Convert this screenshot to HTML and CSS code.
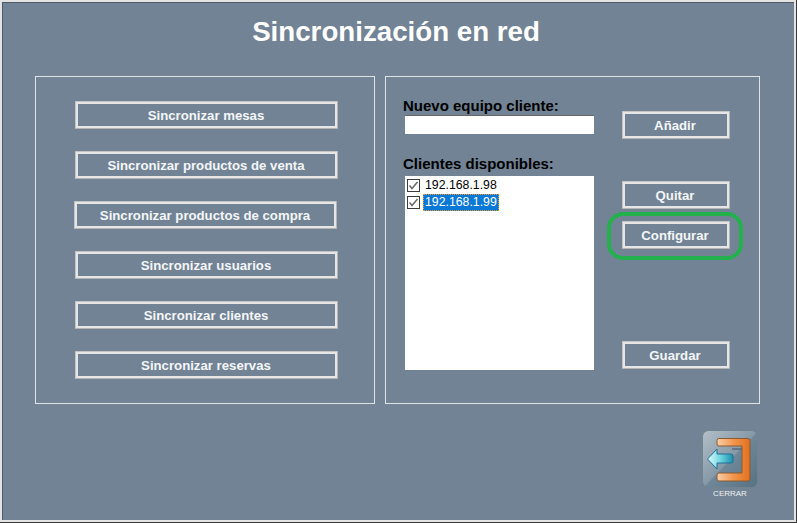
FILE: index.html
```html
<!DOCTYPE html>
<html lang="es">
<head>
<meta charset="utf-8">
<title>Sincronización en red</title>
<link rel="stylesheet" href="styles.css">
</head>
<body>
<main class="window">
  <h1 class="title">Sincronización en red</h1>
  <div class="panels">
    <section class="panel panel-left">
      <button class="btn btn-wide">Sincronizar mesas</button>
      <button class="btn btn-wide">Sincronizar productos de venta</button>
      <button class="btn btn-wide btn-shift">Sincronizar productos de compra</button>
      <button class="btn btn-wide">Sincronizar usuarios</button>
      <button class="btn btn-wide">Sincronizar clientes</button>
      <button class="btn btn-wide">Sincronizar reservas</button>
    </section>
    <section class="panel panel-right">
      <div class="fields">
        <label class="label">Nuevo equipo cliente:</label>
        <input class="input" type="text">
        <label class="label label-list">Clientes disponibles:</label>
        <ul class="list">
          <li class="item"><svg class="check" viewBox="0 0 13 13"><rect x=".5" y=".5" width="12" height="12" fill="#fff" stroke="#3c3c3c"/><path d="M2.5 6.5 5 9.5 10.5 3" fill="none" stroke="#6a6a6a" stroke-width="1.5"/></svg><span class="ip">192.168.1.98</span></li>
          <li class="item"><svg class="check" viewBox="0 0 13 13"><rect x=".5" y=".5" width="12" height="12" fill="#fff" stroke="#3c3c3c"/><path d="M2.5 6.5 5 9.5 10.5 3" fill="none" stroke="#6a6a6a" stroke-width="1.5"/></svg><span class="ip ip-selected">192.168.1.99</span></li>
        </ul>
      </div>
      <div class="actions">
        <button class="btn btn-small">Añadir</button>
        <button class="btn btn-small btn-quitar">Quitar</button>
        <div class="ring-wrap">
          <button class="btn btn-small">Configurar</button>
          <span class="ring"></span>
        </div>
        <button class="btn btn-small btn-guardar">Guardar</button>
      </div>
    </section>
  </div>
  <footer class="footer">
    <div class="close">
      <svg class="close-icon" viewBox="0 0 56 58" width="56" height="58">
        <defs>
          <linearGradient id="tile" x1="0" y1="0" x2="1" y2="1"><stop offset="0" stop-color="#b4c0c9"/><stop offset=".5" stop-color="#8699a7"/><stop offset=".52" stop-color="#6f8798"/><stop offset="1" stop-color="#577284"/></linearGradient>
          <linearGradient id="orange" x1="0" y1="0" x2="1" y2="0"><stop offset="0" stop-color="#f9cfa8"/><stop offset=".5" stop-color="#f2964c"/><stop offset="1" stop-color="#e2701f"/></linearGradient>
          <linearGradient id="cyan" x1="0" y1="0" x2="1" y2="0"><stop offset="0" stop-color="#e0fcfd"/><stop offset=".5" stop-color="#6fd6e0"/><stop offset="1" stop-color="#1d8ea8"/></linearGradient>
        </defs>
        <rect x=".5" y=".5" width="55" height="57" rx="6" fill="url(#tile)" stroke="#71838f"/>
        <path d="M30 19H41V44H30" fill="none" stroke="#56697a" stroke-width="1.5"/>
        <path d="M17 8.500H46Q48 8.500 48 10.500V49Q48 51 46 51H17Q15 51 15 49V45Q15 43 17 43H40V16H17Q15 16 15 14V10.500Q15 8.500 17 8.500Z" fill="url(#orange)" stroke="#8a5a30" stroke-linejoin="round"/>
        <path d="M5.500 29 15 19V24H29Q31 24 31 26V31Q31 33 29 33H15V39Z" fill="url(#cyan)" stroke="#1f6f99" stroke-linejoin="round"/>
      </svg>
      <span class="close-label">CERRAR</span>
    </div>
  </footer>
</main>
</body>
</html>
```
FILE: styles.css
```css
* { box-sizing: border-box; }
html, body { margin: 0; height: 100%; }
body { width: 797px; height: 523px; overflow: hidden; background: #3a3a3a; font-family: "Liberation Sans", Arial, sans-serif; }
.window {
  width: 796px; height: 522px; background: #718394;
  border: 2px solid #e3e3e3;
  box-shadow: inset 1px 1px 0 #4e5a66;
  display: flex; flex-direction: column; padding: 0 34px 0 33px;
}
.title {
  margin: 13px 0 0; padding-right: 3px; height: 34px; line-height: 34px; text-align: center;
  color: #fff; font-size: 27.7px; font-weight: 700;
}
.panels { display: flex; gap: 10px; margin-top: 27px; height: 328px; }
.panel { border: 1px solid #dfe3e6; height: 100%; }
.panel-left { width: 340px; padding: 24px 36px 0 39px; display: flex; flex-direction: column; gap: 22px; }
.panel-right { width: 375px; padding: 20px 0 0 19px; display: flex; }
.btn {
  display: block; background: transparent; color: #f4f6f8;
  border: 1px solid; border-color: #c4c4c4 #b4b4b4 #b4b4b4 #c4c4c4;
  box-shadow: inset 0 0 0 2px #e6e6e6;
  font: 700 13.2px "Liberation Sans", Arial, sans-serif;
  padding: 1px 1px 0 0; text-align: center;
}
.btn-wide { width: 263px; height: 28px; flex: none; }
.btn-shift { margin-left: -1px; }
.btn-small { width: 108px; height: 28px; padding-right: 2px; }
.fields { width: 198px; display: flex; flex-direction: column; }
.label { color: #000; font-size: 15px; font-weight: 700; line-height: 18px; margin-left: -2px; }
.input { width: 189px; height: 19px; margin: 0; border: 0; border-top: 1px solid #666; background: #fff; }
.label-list { margin-top: 21px; }
.list { list-style: none; margin: 3px 0 0; padding: 1px 0 0 2px; width: 189px; height: 194px; background: #fff; }
.item { display: flex; align-items: center; height: 17px; }
.check { width: 13px; height: 13px; flex: none; }
.ip { font-size: 12.3px; color: #000; margin-left: 3px; padding: 0 2px; line-height: 17px; }
.ip-selected { background: #0a78d7; color: #fff; outline: 1px dotted #f49b2c; outline-offset: -1px; }
.actions { display: flex; flex-direction: column; margin: 14px 0 0 19px; }
.btn-quitar { margin-top: 42px; }
.ring-wrap { position: relative; margin-top: 12px; }
.ring {
  position: absolute; left: -15px; top: -9px; width: 136px; height: 48px;
  border: 4.5px solid #22b14c; border-radius: 16px; pointer-events: none;
}
.btn-guardar { margin-top: 92px; }
.footer { display: flex; justify-content: flex-end; margin-top: 26px; }
.close { display: flex; flex-direction: column; align-items: center; width: 56px; margin-right: 2px; }
.close-icon { display: block; }
.close-label { color: #f2f2f2; font-size: 8px; line-height: 10px; margin-top: 1px; }
```
